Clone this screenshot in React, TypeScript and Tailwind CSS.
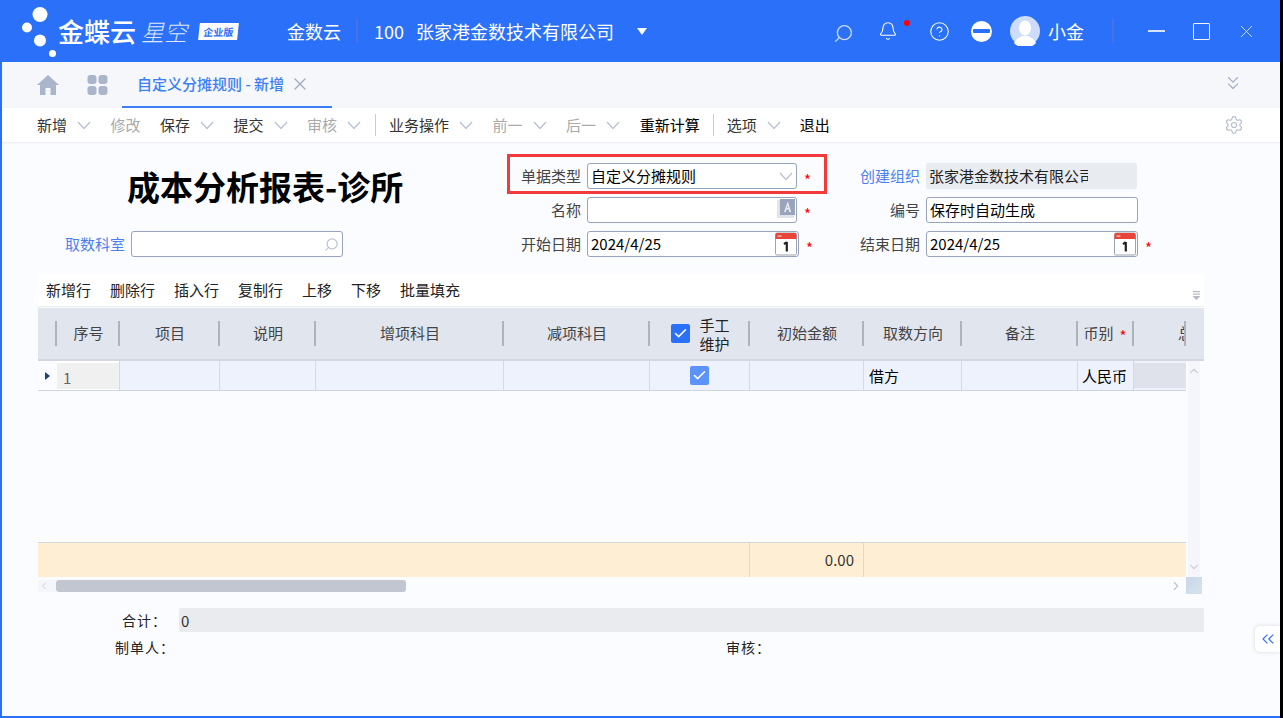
import React from 'react';
import { Search, Bell, CircleHelp, X, Settings, ChevronsDown, ChevronsLeft, ChevronLeft, ChevronRight, ChevronUp, ChevronDown, Check } from 'lucide-react';

const Chevron = ({ className = '' }: { className?: string }) => (
  <svg viewBox="0 0 14 9" className={`w-[14px] h-[9px] ${className}`} fill="none" stroke="#b9c1d1" strokeWidth="1.3">
    <path d="M1 1l6 6.5L13 1" />
  </svg>
);

const Logo = () => (
  <svg viewBox="0 0 58 62" className="w-[58px] h-[62px] shrink-0" fill="#fff">
    <ellipse cx="40" cy="14.5" rx="7.5" ry="7.5" />
    <circle cx="27" cy="27.5" r="5" />
    <circle cx="40" cy="40.5" r="6" />
    <circle cx="52.5" cy="53.5" r="3.5" />
  </svg>
);

const Calendar = () => (
  <svg viewBox="0 0 22 24" className="w-[22px] h-[24px]">
    <rect x="0.5" y="1" width="21" height="22" rx="1.5" fill="#fff" stroke="#9aa3b2" />
    <path d="M0.5 2.5A1.5 1.5 0 0 1 2 1h18a1.5 1.5 0 0 1 1.5 1.5V7H.5z" fill="#e8443a" />
    <rect x="2.5" y="3.5" width="4" height="1.2" fill="#f7c9c5" />
    <path d="M11.8 10v9.5M9 12.2l2.8-2" stroke="#222" strokeWidth="2.2" fill="none" />
  </svg>
);

const BookA = () => (
  <svg viewBox="0 0 18 20" className="w-[18px] h-[20px]">
    <rect x="0" y="1" width="17" height="18" fill="#dfe3ea" />
    <rect x="3" y="0" width="15" height="16" fill="#99a3b9" />
    <path d="M10.5 3L7 13h1.8l.7-2.4h2.2l.7 2.4h1.8L11 3zM10 9l.6-2.6L11.3 9z" fill="#e8ebf1" />
  </svg>
);

const MiniCheck = ({ className }: { className: string }) => (
  <span className={`w-[19px] h-[19px] rounded-[2px] flex items-center justify-center ${className}`}>
    <Check className="w-[15px] h-[15px] text-white" strokeWidth={2.5} />
  </span>
);

const Star = ({ className = '' }: { className?: string }) => (
  <span className={`text-[#f00] text-[15px] leading-none ${className}`}>*</span>
);

const Field = ({ label, labelClass = 'text-[#444]', children, star }: { label: string; labelClass?: string; children: React.ReactNode; star?: boolean }) => (
  <div className="flex items-center h-[26px]">
    <span className={`w-[60px] text-right whitespace-nowrap text-[15px] leading-[26px] ${labelClass}`}>{label}</span>
    <div className="ml-[6px]">{children}</div>
    {star && <Star className="ml-[7px] mt-[6px]" />}
  </div>
);

const Input = ({ w, children, className = '' }: { w: string; children?: React.ReactNode; className?: string }) => (
  <div className={`${w} h-[26px] relative flex items-center rounded-[3px] border border-[#98a3bd] bg-white pl-[3px] pr-[2px] text-[15px] text-black ${className}`}>
    {children}
  </div>
);

const menu = [
  { t: '新增', c: true },
  { t: '修改', g: true },
  { t: '保存', c: true },
  { t: '提交', c: true },
  { t: '审核', c: true, g: true },
];
const menu2 = [
  { t: '业务操作', c: true },
  { t: '前一', c: true, g: true },
  { t: '后一', c: true, g: true },
  { t: '重新计算', d: true },
];

const MenuItem = ({ t, c, g, d }: { t: string; c?: boolean; g?: boolean; d?: boolean }) => (
  <div className="flex items-center">
    <span className={`text-[15px] leading-[34px] whitespace-nowrap ${g ? 'text-[#aaa]' : d ? 'text-black' : 'text-[#333]'}`}>{t}</span>
    {c && <Chevron className="ml-[10px]" />}
  </div>
);

const cols = [
  { w: 'w-[19px]', label: '' },
  { w: 'w-[63px]', label: '序号' },
  { w: 'w-[100px]', label: '项目' },
  { w: 'w-[96px]', label: '说明' },
  { w: 'w-[188px]', label: '增项科目' },
  { w: 'w-[146px]', label: '减项科目' },
  { w: 'w-[100px]', label: 'check' },
  { w: 'w-[114px]', label: '初始金额' },
  { w: 'w-[98px]', label: '取数方向' },
  { w: 'w-[116px]', label: '备注' },
  { w: 'w-[56px]', label: '币别' },
  { w: 'w-[52px]', label: '总金额' },
];

const HeaderCell = ({ w, label, i }: { w: string; label: string; i: number }) => (
  <div className={`${w} shrink-0 relative h-full flex items-center justify-center text-[15px] text-[#444]`}>
    {label === 'check' && (
      <div className="flex items-center gap-[10px] text-[#222]">
        <MiniCheck className="bg-[#2a70f8]" />
        <span className="w-[30px] leading-[19px]">手工维护</span>
      </div>
    )}
    {label === '币别' && (
      <span className="flex items-center gap-[6px] whitespace-nowrap mr-[2px]">
        币别
        <Star className="mt-[3px]" />
      </span>
    )}
    {label === '总金额' && (
      <div className="w-full h-full overflow-hidden flex items-center">
        <span className="ml-[44px] whitespace-nowrap">总金额</span>
      </div>
    )}
    {label !== 'check' && label !== '币别' && label !== '总金额' && label}
    <span className={`absolute top-[13px] w-[2px] h-[25px] bg-[#afb3bb] ${i === 11 ? 'right-0' : 'right-[0px]'}`} />
  </div>
);

export default function App() {
  return (
    <div className="w-[1283px] h-[718px] flex overflow-hidden bg-white font-['Noto_Sans_CJK_SC','Liberation_Sans',sans-serif]">
      <div className="w-[1280px] h-full flex flex-col">
        {/* title bar */}
        <div className="h-[62px] shrink-0 bg-[#2a70f8] flex items-center text-white">
          <Logo />
          <span className="w-[78px] text-[26px] font-medium leading-none whitespace-nowrap">金蝶云</span>
          <span className="ml-[5px] w-[47px] text-[23px] font-light italic leading-none whitespace-nowrap text-[#dce7ff]">星空</span>
          <span className="ml-[11px] w-[39px] h-[17px] bg-white -skew-x-6 flex items-center justify-center text-[10px] font-bold leading-none text-[#2a70f8] whitespace-nowrap">企业版</span>
          <span className="ml-[49px] w-[54px] text-[18px] whitespace-nowrap">金数云</span>
          <span className="ml-[15px] w-[2px] h-[24px] bg-[#4d6fe8]" />
          <span className="ml-[16px] w-[42px] text-[18px]">100</span>
          <span className="w-[199px] text-[18px] whitespace-nowrap">张家港金数技术有限公司</span>
          <span className="ml-[22px] w-0 h-0 border-x-[5.5px] border-x-transparent border-t-[7px] border-t-white" />
          <Search className="ml-[186px] w-[21px] h-[21px] mt-[4px] text-[#cfdcf8] -scale-x-100 rotate-0" strokeWidth={1.5} />
          <div className="ml-[24px] relative w-[20px] h-[22px]">
            <Bell className="w-[20px] h-[22px] text-white" strokeWidth={1.3} />
            <span className="absolute -top-[0px] left-[26px] w-[6px] h-[6px] rounded-full bg-[#f00]" />
          </div>
          <CircleHelp className="ml-[31px] w-[21px] h-[21px] text-white" strokeWidth={1.2} />
          <span className="ml-[21px] w-[21px] h-[21px] rounded-full bg-white flex items-center justify-center">
            <span className="w-[17px] h-[4px] bg-[#2a70f8] rounded-[1px]" />
          </span>
          <svg viewBox="0 0 30 30" className="ml-[18px] w-[30px] h-[30px] shrink-0">
            <circle cx="15" cy="15" r="15" fill="#cddcfa" />
            <ellipse cx="15" cy="12" rx="6" ry="7.5" fill="#fff" />
            <path d="M4 27c2-5 7-6 8-7h6c1 1 6 2 8 7a15 15 0 0 1-22 0z" fill="#fff" />
          </svg>
          <span className="ml-[8px] w-[36px] text-[18px] whitespace-nowrap">小金</span>
          <span className="ml-[28px] w-[2px] h-[24px] bg-[#4d6fe8]" />
          <span className="ml-[34px] w-[17px] h-[1.5px] bg-[#d7e3fc]" />
          <span className="ml-[28px] w-[17px] h-[17px] rounded-[1px] border border-[#eef3ff]" />
          <X className="ml-[26px] w-[21px] h-[21px] text-[#d7e3fc]" strokeWidth={1.1} />
        </div>

        <div className="flex-1 min-h-0 flex flex-col border-l-2 border-b-2 border-[#2a70f8] bg-[#fbfcff] relative">
          {/* tabs */}
          <div className="h-[46px] shrink-0 bg-[#f5f7fb] flex items-center pl-[35px] pr-[36px]">
            <svg viewBox="0 0 22 20" className="w-[22px] h-[20px]" fill="#abb5c9">
              <path d="M11 0L0 10h3v10h5.5v-7h5v7H19V10h3z" />
            </svg>
            <svg viewBox="0 0 20 20" className="ml-[28px] w-[21px] h-[20px]" fill="#abb5c9">
              <rect x="0" y="0" width="9" height="9" rx="3" />
              <rect x="11" y="0" width="9" height="9" rx="3" />
              <rect x="0" y="11" width="9" height="9" rx="3" />
              <rect x="11" y="11" width="9" height="9" rx="3" />
            </svg>
            <div className="ml-[14px] w-[210px] h-full flex items-center pl-[15px] border-b-2 border-[#3b7ff6]">
              <span className="text-[15px] font-medium text-[#3b7ff6] whitespace-nowrap">自定义分摊规则 - 新增</span>
              <X className="ml-[6px] w-[20px] h-[20px] text-[#a3adc2]" strokeWidth={1.6} />
            </div>
            <ChevronsDown className="ml-auto w-[22px] h-[22px] mb-[4px] text-[#a3adc2]" strokeWidth={1.2} />
          </div>

          {/* toolbar */}
          <div className="h-[34px] shrink-0 bg-white shadow-[0_1px_2px_rgba(0,0,0,0.08)] flex items-center pl-[35px] pr-[36px]">
            <div className="flex items-center gap-[19.5px]">
              {menu.map((m) => <MenuItem key={m.t} {...m} />)}
            </div>
            <span className="ml-[14px] w-px h-[22px] bg-[#c4cddc]" />
            <div className="ml-[13px] flex items-center gap-[19.5px]">
              {menu2.map((m) => <MenuItem key={m.t} {...m} />)}
            </div>
            <span className="ml-[13px] w-px h-[22px] bg-[#c4cddc]" />
            <div className="ml-[13px] flex items-center gap-[19px]">
              <MenuItem t="选项" c />
              <MenuItem t="退出" d />
            </div>
            <Settings className="ml-auto w-[20px] h-[20px] text-[#b3bccd]" strokeWidth={1.4} />
          </div>

          {/* form */}
          <div className="h-[132px] shrink-0 flex pt-[21px]">
            <div className="w-[519px] shrink-0">
              <h1 className="pl-[125px] h-[46px] text-[33px] font-bold leading-[46px] text-black whitespace-nowrap">成本分析报表-诊所</h1>
              <div className="ml-[63px] mt-[22px]">
                <Field label="取数科室" labelClass="text-[#4d7ff0]">
                  <Input w="w-[212px]">
                    <Search className="absolute right-[3px] top-[5px] w-[15px] h-[15px] text-[#bcc4d2] -scale-x-100" strokeWidth={2} />
                  </Input>
                </Field>
              </div>
            </div>
            <div className="w-[339px] shrink-0 flex flex-col gap-[8px]">
              <div className="relative">
                <Field label="单据类型" star>
                  <Input w="w-[210px]">
                    自定义分摊规则
                    <Chevron className="absolute right-[3px] top-[8px]" />
                  </Input>
                </Field>
                <span className="absolute -left-[14px] -top-[9px] w-[320px] h-[40px] border-[3px] border-[#f33a3a]" />
              </div>
              <Field label="名称" star>
                <Input w="w-[210px]">
                  <span className="absolute right-[1px] top-[1px]"><BookA /></span>
                </Input>
              </Field>
              <Field label="开始日期" star>
                <Input w="w-[212px]">
                  2024/4/25
                  <span className="absolute right-[1px] top-[0px]"><Calendar /></span>
                </Input>
              </Field>
            </div>
            <div className="flex-1 flex flex-col gap-[8px]">
              <Field label="创建组织" labelClass="text-[#4d7ff0]">
                <div className="w-[211px] h-[26px] rounded-[2px] bg-[#e8ebef] pl-[3px] text-[15px] leading-[26px] text-[#222] overflow-hidden whitespace-nowrap">
                  <div className="w-[159px] overflow-hidden">张家港金数技术有限公司</div>
                </div>
              </Field>
              <Field label="编号">
                <Input w="w-[212px]" className="text-[#bbb]">保存时自动生成</Input>
              </Field>
              <Field label="结束日期" star>
                <Input w="w-[212px]">
                  2024/4/25
                  <span className="absolute right-[1px] top-[0px]"><Calendar /></span>
                </Input>
              </Field>
            </div>
          </div>

          {/* table */}
          <div className="ml-[36px] w-[1166px] shrink-0 flex flex-col">
            <div className="h-[33px] bg-white border-b border-[#eeeff2] flex items-center pl-[8px] pr-[3px] gap-[19px] text-[15px] text-[#222]">
              {['新增行', '删除行', '插入行', '复制行', '上移', '下移', '批量填充'].map((t) => (
                <span key={t} className="whitespace-nowrap">{t}</span>
              ))}
              <svg viewBox="0 0 9 10" className="ml-auto mt-[12px] w-[9px] h-[10px]" fill="#b5b9c2">
                <rect x="1" y="0" width="7" height="1.2" />
                <rect x="1" y="2.5" width="7" height="1.2" />
                <path d="M0.5 5h8l-4 4z" />
              </svg>
            </div>
            <div className="mt-px h-[53px] bg-[#e1e5ee] border-b-2 border-[#d3d7e2] flex">
              {cols.map((c, i) => <HeaderCell key={c.w + c.label} w={c.w} label={c.label} i={i} />)}
            </div>
            <div className="flex h-[216px]">
              <div className="w-[1148px] flex flex-col">
                <div className="h-[30px] flex border-b border-[#d0d4dc]">
                  <div className="w-[19px] flex items-center justify-center">
                    <span className="w-0 h-0 mr-[1px] border-y-[4.5px] border-y-transparent border-l-[5px] border-l-[#1a3f7a]" />
                  </div>
                  <div className="w-[63px] pl-[6px] pt-[2px] border-r border-[#d5d9e4] bg-white">
                    <div className="h-[26px] -ml-[6px] pl-[6px] bg-[#f0f0f0] text-[15px] leading-[30px] text-[#666]">1</div>
                  </div>
                  <div className="w-[100px] bg-[#eef2fc] border-r border-[#d5d9e4]" />
                  <div className="w-[96px] bg-[#eef2fc] border-r border-[#d5d9e4]" />
                  <div className="w-[188px] bg-[#eef2fc] border-r border-[#d5d9e4]" />
                  <div className="w-[146px] bg-[#eef2fc] border-r border-[#d5d9e4]" />
                  <div className="w-[100px] bg-[#eef2fc] border-r border-[#d5d9e4] flex items-center justify-center">
                    <MiniCheck className="bg-[#5c93fb]" />
                  </div>
                  <div className="w-[114px] bg-[#eef2fc] border-r border-[#d5d9e4]" />
                  <div className="w-[98px] bg-[#eef2fc] border-r border-[#d5d9e4] pl-[5px] text-[15px] leading-[30px] text-black">借方</div>
                  <div className="w-[116px] bg-[#eef2fc] border-r border-[#d5d9e4]" />
                  <div className="w-[56px] bg-[#eef2fc] border-r border-[#d5d9e4] pl-[4px] text-[15px] leading-[30px] text-black whitespace-nowrap">人民币</div>
                  <div className="w-[52px] py-[2px] bg-[#eef2fc]">
                    <div className="h-full bg-[#dfe2ea]" />
                  </div>
                </div>
                <div className="flex-1" />
                <div className="h-[35px] bg-[#feefd4] border-t border-[#d3d7e0] flex text-[15px] text-[#333]">
                  <div className="w-[712px] border-r border-[#d5d9e4]" />
                  <div className="w-[114px] border-r border-[#d5d9e4] pr-[9px] text-right leading-[34px]">0.00</div>
                </div>
              </div>
              <div className="ml-[2px] w-[12px] bg-[#f4f6fb] flex flex-col items-center justify-between py-[3px]">
                <ChevronUp className="w-[14px] h-[14px] text-[#ccd0d8]" />
                <ChevronDown className="w-[14px] h-[14px] text-[#ccd0d8]" />
              </div>
            </div>
            <div className="h-[17px] flex">
              <div className="w-[1148px] flex items-center relative">
                <div className="w-[18px] h-[12px] mb-[-1px] bg-[#f4f6fb] flex items-center">
                  <ChevronLeft className="w-[12px] h-[12px] text-[#ccd0d8]" />
                </div>
                <div className="w-[350px] h-[12px] mb-[-1px] rounded-[3px] bg-[#c1c6d0]" />
                <ChevronRight className="ml-auto mr-[3px] w-[14px] h-[14px] text-[#bfc3cb]" />
              </div>
              <div className="w-[16px] bg-gradient-to-br from-[#c9d6e6] to-[#d6e3ef]" />
            </div>
          </div>

          {/* summary */}
          <div className="mt-[14px] flex items-center h-[24px] text-[14px] text-[#222]">
            <span className="ml-[120px] w-[57px] tracking-[1px] whitespace-nowrap">合计：</span>
            <div className="w-[1025px] h-full rounded-[2px] bg-[#e9ebef] pl-[2px] text-[15px] leading-[26px] text-[#333]">0</div>
          </div>
          <div className="mt-[4px] flex items-center h-[22px] text-[14px] text-[#222]">
            <span className="ml-[113px] w-[611px] tracking-[1px] whitespace-nowrap">制单人：</span>
            <span className="tracking-[1px] whitespace-nowrap">审核：</span>
          </div>

          {/* collapse handle */}
          <div className="absolute right-0 top-[564px] w-[25px] h-[26px] rounded-l-[5px] bg-white shadow-[0_0_4px_rgba(0,0,0,0.15)] flex items-center justify-center">
            <ChevronsLeft className="w-[20px] h-[20px] text-[#3b6ff0]" strokeWidth={1.4} />
          </div>
        </div>
      </div>
      <div className="w-[3px] h-full bg-black shrink-0" />
    </div>
  );
}
